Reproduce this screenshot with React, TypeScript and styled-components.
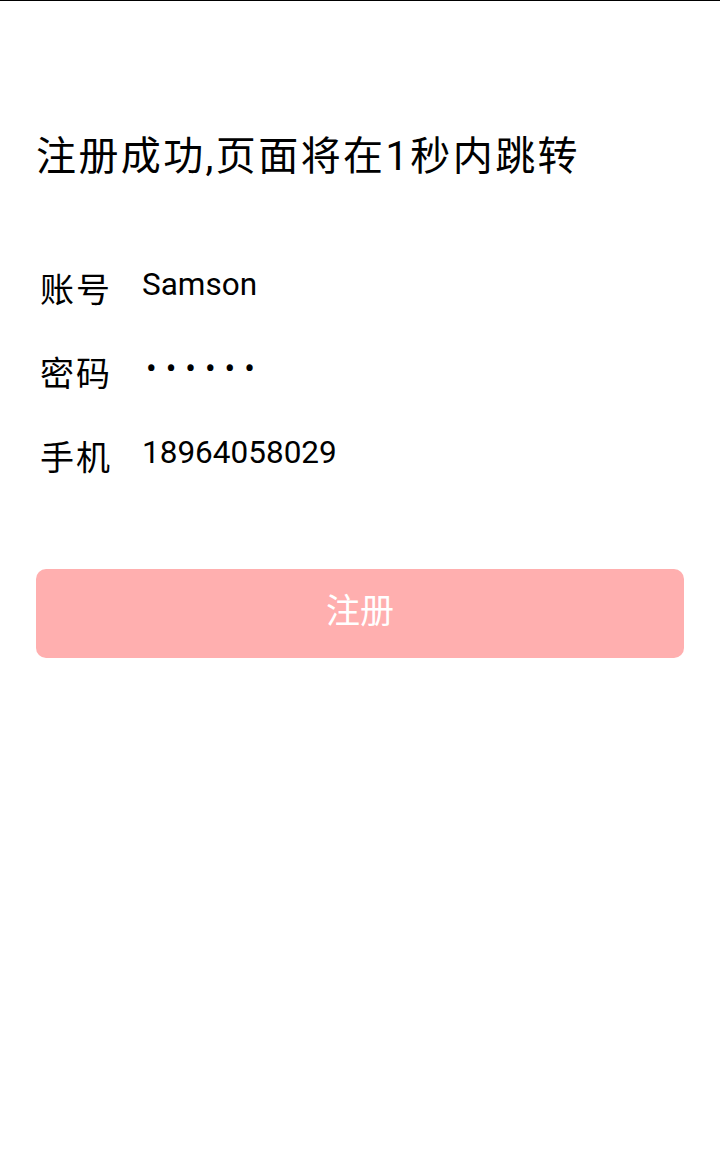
import React from "react";
import styled, { createGlobalStyle } from "styled-components";

const Global = createGlobalStyle`
  html, body { margin: 0; padding: 0; background: #fff; }
  body { font-family: Roboto, "Noto Sans CJK SC", sans-serif; color: #000; }
`;

const Page = styled.div`
  border-top: 1px solid #000;
  padding: 0 36px;
  min-height: 1160px;
`;

const Title = styled.h1`
  margin: 124px 0 0 0;
  font-family: Roboto, "Noto Sans CJK SC", sans-serif;
  font-weight: 400;
  font-size: 40px;
  line-height: 64px;
  letter-spacing: 2.4px;
`;

const Form = styled.div`
  margin-top: 64px;
  padding-left: 4px;
  display: flex;
  flex-direction: column;
  gap: 20px;
`;

const Row = styled.div`
  display: flex;
  align-items: center;
  height: 64px;
`;

const Label = styled.span`
  width: 102px;
  font-family: "Noto Sans CJK SC", sans-serif;
  font-size: 34px;
  line-height: 40px;
  letter-spacing: 2px;
  padding-top: 6px;
`;

const Value = styled.span<{ $dots?: boolean }>`
  font-family: Roboto, sans-serif;
  font-size: 31.5px;
  line-height: 40px;
  letter-spacing: ${(p) => (p.$dots ? "9px" : "0")};
  padding-left: ${(p) => (p.$dots ? "4px" : "0")};
`;

const Button = styled.button`
  margin-top: 84px;
  width: 100%;
  height: 89px;
  border: none;
  border-radius: 10px;
  background: #ffafaf;
  color: #fff;
  font-family: "Noto Sans CJK SC", sans-serif;
  font-size: 34px;
  display: flex;
  align-items: center;
  justify-content: center;
  padding: 0 0 10px 0;
`;

export default function App() {
  return (
    <>
      <Global />
      <Page>
        <Title>注册成功,页面将在1秒内跳转</Title>
        <Form>
          <Row>
            <Label>账号</Label>
            <Value>Samson</Value>
          </Row>
          <Row>
            <Label>密码</Label>
            <Value $dots>••••••</Value>
          </Row>
          <Row>
            <Label>手机</Label>
            <Value>18964058029</Value>
          </Row>
        </Form>
        <Button>注册</Button>
      </Page>
    </>
  );
}
